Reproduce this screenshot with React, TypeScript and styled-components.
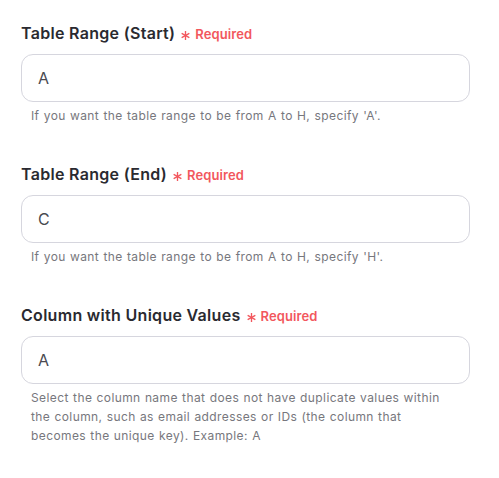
import React from "react"
import styled, { createGlobalStyle } from "styled-components"

const GlobalStyle = createGlobalStyle`
  html, body {
    margin: 0;
    padding: 0;
    background: #ffffff;
    font-family: Inter, "Noto Sans", "Liberation Sans", sans-serif;
  }
`

const Form = styled.div`
  display: flex;
  flex-direction: column;
  gap: 39px;
  width: 449px;
  padding: 23px 0 0 21px;
`

const Field = styled.div`
  display: flex;
  flex-direction: column;
`

const LabelRow = styled.div`
  display: flex;
  align-items: center;
  height: 20px;
  margin-bottom: 11px;
`

const Label = styled.label`
  font-size: 16px;
  font-weight: 600;
  color: #2a2a30;
  letter-spacing: 0.3px;
`

const Required = styled.span`
  display: flex;
  align-items: center;
  gap: 5px;
  margin-left: 6px;
  font-size: 13px;
  font-weight: 600;
  color: #f2575d;
  letter-spacing: 0.1px;
  margin-top: 2px;
`

const Input = styled.div`
  box-sizing: border-box;
  height: 48px;
  border: 1px solid #d6d6de;
  border-radius: 12px;
  padding: 0 16px;
  display: flex;
  align-items: center;
  font-size: 16px;
  color: #4a4a50;
`

const Help = styled.p`
  margin: 4px 0 0 10px;
  font-size: 12px;
  line-height: 19px;
  color: #77777d;
  letter-spacing: 0.4px;
  word-spacing: 0.5px;
  padding-right: 20px;
`

const Star = () => (
  <svg width="9" height="9" viewBox="0 0 12 12" fill="none" stroke="currentColor" strokeWidth="1.8" strokeLinecap="round" style={{ marginTop: 2 }}>
    <line x1="6" y1="0.8" x2="6" y2="11.2" />
    <line x1="1.5" y1="3.4" x2="10.5" y2="8.6" />
    <line x1="1.5" y1="8.6" x2="10.5" y2="3.4" />
  </svg>
)

const fields = [
  { label: "Table Range (Start)", value: "A", help: "If you want the table range to be from A to H, specify 'A'." },
  { label: "Table Range (End)", value: "C", help: "If you want the table range to be from A to H, specify 'H'." },
  {
    label: "Column with Unique Values",
    value: "A",
    help: "Select the column name that does not have duplicate values within the column, such as email addresses or IDs (the column that becomes the unique key). Example: A",
  },
]

const App: React.FC = () => (
  <>
    <GlobalStyle />
    <Form>
      {fields.map((f) => (
        <Field key={f.label}>
          <LabelRow>
            <Label>{f.label}</Label>
            <Required>
              <Star />
              Required
            </Required>
          </LabelRow>
          <Input>{f.value}</Input>
          <Help>{f.help}</Help>
        </Field>
      ))}
    </Form>
  </>
)

export default App
